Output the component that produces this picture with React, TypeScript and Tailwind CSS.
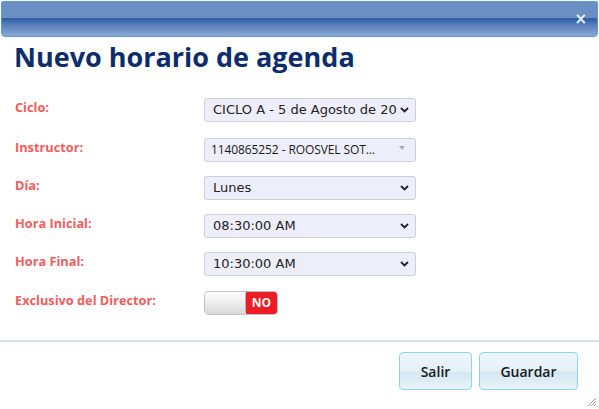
import React from "react";

function Chevron() {
  return (
    <svg width="9" height="6" viewBox="0 0 9 6" className="shrink-0">
      <path d="M1 1 L4.5 4.5 L8 1" stroke="#222" strokeWidth="1.8" fill="none" />
    </svg>
  );
}

function Select({ value, chevron = true }: { value: string; chevron?: boolean }) {
  return (
    <div className="w-[212px] h-[24px] rounded-[3px] border border-[#cfcfd6] bg-[#eeeefb] flex items-center pl-[8px] pr-[6px] justify-between">
      {chevron ? (
        <span className="text-[13px] text-[#222] whitespace-nowrap" style={{ fontFamily: "'DejaVu Sans', Verdana, sans-serif" }}>
          {value}
        </span>
      ) : (
        <span className="text-[12px] text-[#1a1a1a] whitespace-nowrap -ml-[2px] tracking-[-0.1px]" style={{ fontFamily: "'Open Sans', sans-serif" }}>
          {value}
        </span>
      )}
      {chevron ? (
        <Chevron />
      ) : (
        <svg width="6" height="4" viewBox="0 0 6 4" className="shrink-0 mr-[4px] mb-[4px]">
          <path d="M0 0 L6 0 L3 4 Z" fill="#aaa" />
        </svg>
      )}
    </div>
  );
}

function Row({ label, children, h = "h-[38px]" }: { label: string; children: React.ReactNode; h?: string }) {
  return (
    <div className={`flex items-start ${h}`}>
      <div
        className="w-[189px] text-[12.75px] font-bold text-[#f25c5c] leading-[18px]"
        style={{ fontFamily: "'Open Sans', sans-serif" }}
      >
        {label}
      </div>
      {children}
    </div>
  );
}

export default function App() {
  return (
    <div className="w-[599px] h-[409px] bg-white relative overflow-hidden flex flex-col">
      <div className="h-[36px] mx-[1px] mt-[1px] rounded-b-[4px] rounded-t-[2px] border border-[#5d9ad8] bg-[linear-gradient(to_bottom,#6b8fc2_0%,#6b8fc2_46%,#2c5ca6_48%,#5e82bc_70%,#8aa8d3_100%)] flex items-center justify-end pr-[10px]">
        <span className="text-[#eef2f8] text-[15px] font-bold leading-none mt-[1px]" style={{ fontFamily: "'DejaVu Sans', sans-serif" }}>
          ×
        </span>
      </div>
      <h1
        className="ml-[14px] mt-[2px] text-[27px] font-bold text-[#0d2c6c] leading-[36px]"
        style={{ fontFamily: "'Open Sans', sans-serif" }}
      >
        Nuevo horario de agenda
      </h1>
      <div className="ml-[15px] mt-[23px] flex flex-col">
        <Row label="Ciclo:" h="h-[40px]">
          <Select value="CICLO A - 5 de Agosto de 20" />
        </Row>
        <Row label="Instructor:">
          <Select value="1140865252 - ROOSVEL SOT..." chevron={false} />
        </Row>
        <Row label="Día:">
          <Select value="Lunes" />
        </Row>
        <Row label="Hora Inicial:">
          <Select value="08:30:00 AM" />
        </Row>
        <Row label="Hora Final:" h="h-[39px]">
          <Select value="10:30:00 AM" />
        </Row>
        <Row label="Exclusivo del Director:">
          <div className="w-[74px] h-[24px] rounded-[4px] border border-[#c2c2c2] flex overflow-hidden">
            <div className="w-[41px] bg-[linear-gradient(to_bottom,#ffffff,#d9d9d9)] border-r border-[#b5b5b5] rounded-[3px]" />
            <div className="flex-1 bg-[#ee1c24] flex items-center justify-center text-white text-[12px] font-bold" style={{ fontFamily: "'Open Sans', sans-serif" }}>
              NO
            </div>
          </div>
        </Row>
      </div>
      <div className="absolute left-0 right-0 top-[340px] h-[2px] bg-[#d3e0ef]" />
      <div className="absolute top-[352px] right-[21px] flex gap-[7px]">
        {["Salir", "Guardar"].map((t, i) => (
          <button
            key={t}
            className={`${i === 0 ? "w-[73px]" : "w-[99px]"} h-[38px] rounded-[4px] border border-[#8fd3f2] bg-[linear-gradient(to_bottom,#eef6fb_0%,#e4f0f7_50%,#d3e7f1_55%,#e8f3f9_100%)] text-[14px] font-semibold text-[#1a1a1a]`}
            style={{ fontFamily: "'Open Sans', sans-serif" }}
          >
            {t}
          </button>
        ))}
      </div>
      <svg className="absolute right-[3px] bottom-[3px]" width="10" height="10" viewBox="0 0 10 10">
        <path d="M10 2 L2 10 M10 5 L5 10 M10 8 L8 10" stroke="#8aa0b8" strokeWidth="1" />
      </svg>
    </div>
  );
}
